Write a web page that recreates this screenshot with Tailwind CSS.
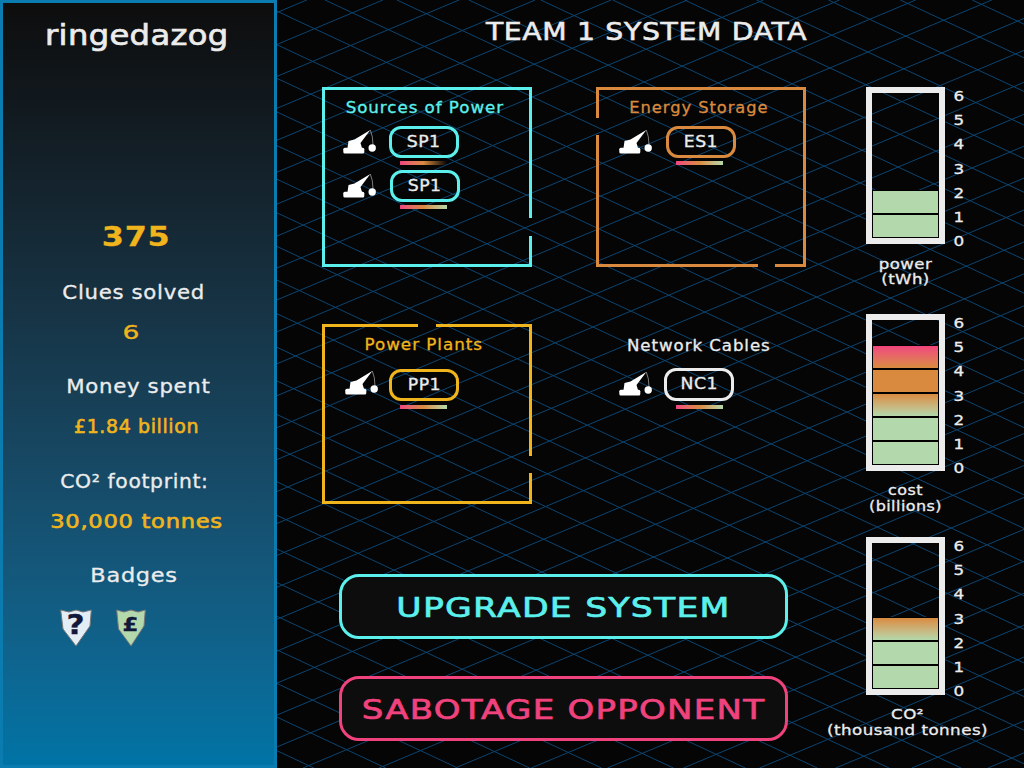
<!DOCTYPE html>
<html lang="en">
<head>
    <meta charset="UTF-8">
    <title>Team 1 System Data</title>
    <script src="https://cdn.jsdelivr.net/npm/@tailwindcss/browser@4"></script>
</head>
<body class="relative w-[1024px] h-[768px] overflow-hidden bg-[#050505] text-[#ececec] font-['DejaVu_Sans',sans-serif] [-webkit-text-stroke:0.3px]">

    <!-- background lattice, filled in by the script at the bottom -->
    <svg id="lattice" class="absolute inset-0" width="1024" height="768"></svg>

    <svg width="0" height="0" class="absolute">
        <symbol id="crane" viewBox="0 0 34 26">
            <rect x="0.3" y="18.8" width="21" height="5.6" rx="1.5" fill="#fff"/>
            <path d="M4.5 19 L5.5 12 L11.5 10.5 L27.3 1 L17.5 14 L19 19 Z" fill="#fff"/>
            <path d="M27.3 1 Q30 7 30 16" fill="none" stroke="#ccc" stroke-width="0.6"/>
            <circle cx="29.2" cy="19" r="3.7" fill="#fff"/>
        </symbol>
    </svg>

    <div class="relative flex w-[1024px] h-[768px]">
        <!-- sidebar -->
        <aside class="w-[277px] h-[768px] shrink-0 border-3 border-[#0a7cb0] bg-gradient-to-b from-[#0d0d0d] to-[#0074a6] flex flex-col items-center pt-[19px] pr-[4px] leading-[28px] text-[19px] tracking-[0.6px]">
            <h1 class="text-[28px] leading-[28px] tracking-[0.3px] scale-x-[1.15] [-webkit-text-stroke:0.7px]">ringedazog</h1>
            <p class="mt-[173px] text-[#f0b41c] text-[27px] font-bold scale-x-[1.18]">375</p>
            <p class="mt-[27px] mr-[5px] scale-x-[1.12]">Clues solved</p>
            <p class="mt-[12px] mr-[11px] text-[#f0b41c] scale-x-[1.4]">6</p>
            <p class="mt-[26px] ml-[4px] scale-x-[1.12]">Money spent</p>
            <p class="mt-[12px] text-[#f0b41c] [-webkit-text-stroke:0.6px]">£1.84 billion</p>
            <p class="mt-[27px] mr-[4px] scale-x-[1.07]">CO² footprint:</p>
            <p class="mt-[12px] text-[#f0b41c] scale-x-[1.19] [-webkit-text-stroke:0.6px]">30,000 tonnes</p>
            <p class="mt-[26px] mr-[5px] scale-x-[1.18]">Badges</p>
            <div class="mt-[20px] self-start ml-[57px] flex gap-[24px]">
                <div class="grid place-items-center w-[32px] h-[38px]">
                    <svg class="col-start-1 row-start-1" width="32" height="38" viewBox="0 0 32 38"><path d="M0.7 1 L9 3 L16 1 L23 3 L31.3 1 L30 17 L16 37 L3 20 Z" fill="#e3edf5" stroke="#777" stroke-width="1"/></svg>
                    <span class="col-start-1 row-start-1 text-[#12183a] text-[26px] font-bold leading-none -mt-[6px] scale-x-[1.2]">?</span>
                </div>
                <div class="grid place-items-center w-[30px] h-[38px]">
                    <svg class="col-start-1 row-start-1" width="30" height="38" viewBox="0 0 30 38"><path d="M0.7 1 L8 3 L15 1 L22 3 L29.3 1 L28 17 L15 37 L2.5 20 Z" fill="#b2d8ab" stroke="#777" stroke-width="1"/></svg>
                    <span class="col-start-1 row-start-1 text-[#12183a] text-[19px] font-bold leading-none -mt-[8px] scale-x-[1.2]">£</span>
                </div>
            </div>
        </aside>

        <main class="flex-1">
            <h2 class="mt-[18px] pr-[7px] text-center text-[25px] leading-[28px] tracking-[0.6px] scale-x-[1.13] [-webkit-text-stroke:0.6px]">TEAM 1 SYSTEM DATA</h2>

            <div class="flex mt-[41px] ml-[45px]">
                <div class="w-[484px]">
                    <div class="grid grid-cols-[210px_210px] grid-rows-[180px_180px] gap-x-[64px] gap-y-[57px]">

                        <section class="relative text-[#5cf0ec]">
                            <svg class="absolute inset-0" width="210" height="180" fill="none" stroke="currentColor" stroke-width="3"><path d="M208.5 131 V1.5 H1.5 V178.5 H208.5 V149"/></svg>
                            <h3 class="pt-[11px] pr-[4px] text-center text-[15.5px] leading-[20px] tracking-[0.9px] scale-x-[1.075]">Sources of Power</h3>
                            <div class="mt-[8px] flex flex-col gap-[5px]">
                                <div class="flex pl-[21px] gap-[12px]">
                                    <svg class="mt-[3px]" width="34" height="26"><use href="#crane"/></svg>
                                    <div>
                                        <div class="w-[70px] h-[32px] rounded-[12px] border-3 border-[#5cf0ec] flex items-center justify-center text-[#ececec] text-[15px] tracking-[0.4px]"><span class="scale-x-[1.15]">SP1</span></div>
                                        <div class="mt-[3px] ml-[11px] w-[47px] h-[4px] bg-gradient-to-r from-[#f0437c] via-[#d98a3e] to-transparent"></div>
                                    </div>
                                </div>
                                <div class="flex pl-[21px] gap-[13px]">
                                    <svg class="mt-[3px]" width="34" height="26"><use href="#crane"/></svg>
                                    <div>
                                        <div class="w-[70px] h-[32px] rounded-[12px] border-3 border-[#5cf0ec] flex items-center justify-center text-[#ececec] text-[15px] tracking-[0.4px]"><span class="scale-x-[1.15]">SP1</span></div>
                                        <div class="mt-[3px] ml-[10px] w-[47px] h-[4px] bg-gradient-to-r from-[#f0437c] via-[#d98a3e] to-[#b2d8ab]"></div>
                                    </div>
                                </div>
                            </div>
                        </section>

                        <section class="relative text-[#d98a3e]">
                            <svg class="absolute inset-0" width="210" height="180" fill="none" stroke="currentColor" stroke-width="3"><path d="M1.5 31 V1.5 H208.5 V178.5 H179 M162 178.5 H1.5 V48"/></svg>
                            <h3 class="pt-[11px] pr-[4px] text-center text-[15.5px] leading-[20px] tracking-[0.9px] scale-x-[1.05]">Energy Storage</h3>
                            <div class="mt-[8px] flex pl-[23px] gap-[13px]">
                                <svg class="mt-[3px]" width="34" height="26"><use href="#crane"/></svg>
                                <div>
                                    <div class="w-[70px] h-[32px] rounded-[12px] border-3 border-[#d98a3e] flex items-center justify-center text-[#ececec] text-[15px] tracking-[0.4px]"><span class="scale-x-[1.15]">ES1</span></div>
                                    <div class="mt-[3px] ml-[10px] w-[47px] h-[4px] bg-gradient-to-r from-[#f0437c] via-[#d98a3e] to-[#b2d8ab]"></div>
                                </div>
                            </div>
                        </section>

                        <section class="relative text-[#f0b41c]">
                            <svg class="absolute inset-0" width="210" height="180" fill="none" stroke="currentColor" stroke-width="3"><path d="M208.5 132 V1.5 H114 M96 1.5 H1.5 V178.5 H208.5 V149"/></svg>
                            <h3 class="pt-[11px] pr-[6px] text-center text-[15.5px] leading-[20px] tracking-[0.9px] scale-x-[1.08]">Power Plants</h3>
                            <div class="mt-[14px] flex pl-[23px] gap-[10px]">
                                <svg class="mt-[1px]" width="34" height="26"><use href="#crane"/></svg>
                                <div>
                                    <div class="w-[70px] h-[32px] rounded-[12px] border-3 border-[#f0b41c] flex items-center justify-center text-[#ececec] text-[15px] tracking-[0.4px]"><span class="scale-x-[1.15]">PP1</span></div>
                                    <div class="mt-[4px] ml-[11px] w-[47px] h-[4px] bg-gradient-to-r from-[#f0437c] via-[#d98a3e] to-[#b2d8ab]"></div>
                                </div>
                            </div>
                        </section>

                        <section>
                            <h3 class="pt-[12px] pr-[4px] text-center text-[15.5px] leading-[20px] tracking-[0.9px] scale-x-[1.07]">Network Cables</h3>
                            <div class="mt-[12px] flex pl-[23px] gap-[11px]">
                                <svg class="mt-[3px]" width="34" height="26"><use href="#crane"/></svg>
                                <div>
                                    <div class="w-[70px] h-[33px] rounded-[12px] border-3 border-[#ececec] flex items-center justify-center text-[15px] tracking-[0.4px]"><span class="scale-x-[1.15]">NC1</span></div>
                                    <div class="mt-[4px] ml-[12px] w-[47px] h-[4px] bg-gradient-to-r from-[#f0437c] via-[#d98a3e] to-[#b2d8ab]"></div>
                                </div>
                            </div>
                        </section>
                    </div>

                    <button class="block mt-[70px] ml-[17px] w-[449px] h-[65px] rounded-[20px] border-3 border-[#5cf0ec] bg-[#0d0d0d] text-[#5cf0ec] text-[27px] tracking-[1px]"><span class="block scale-x-[1.28] translate-y-[2px] [-webkit-text-stroke:0.7px]">UPGRADE SYSTEM</span></button>
                    <button class="block mt-[37px] ml-[17px] w-[449px] h-[65px] rounded-[20px] border-3 border-[#f0427c] bg-[#0d0d0d] text-[#f0427c] text-[27px] tracking-[1px]"><span class="block scale-x-[1.26] translate-y-[2px] [-webkit-text-stroke:0.7px]">SABOTAGE OPPONENT</span></button>
                </div>

                <!-- gauges -->
                <div class="ml-[60px] text-[14px] tracking-[0.4px]">
                    <div>
                        <div class="flex">
                            <div class="w-[79px] h-[157px] border-6 border-[#ececec] flex flex-col justify-end">
                                <div class="h-[24px] border border-black bg-[#b2d8ab]"></div>
                                <div class="h-[24px] border border-black bg-[#b2d8ab]"></div>
                            </div>
                            <div class="w-[28px] h-[157px] -mt-[3px] text-center leading-[24.2px] scale-x-[1.2]"><p>6</p><p>5</p><p>4</p><p>3</p><p>2</p><p>1</p><p>0</p></div>
                        </div>
                        <div class="mt-[13px] w-[79px] flex flex-col items-center leading-[15px] whitespace-nowrap scale-x-[1.18]"><span>power</span><span>(tWh)</span></div>
                    </div>

                    <div class="mt-[27px]">
                        <div class="flex">
                            <div class="w-[79px] h-[157px] border-6 border-[#ececec] flex flex-col justify-end">
                                <div class="h-[24px] border border-black bg-gradient-to-b from-[#f0437c] to-[#d98a3e]"></div>
                                <div class="h-[24px] border border-black bg-[#d98a3e]"></div>
                                <div class="h-[24px] border border-black bg-gradient-to-b from-[#d98a3e] to-[#b2d8ab]"></div>
                                <div class="h-[24px] border border-black bg-[#b2d8ab]"></div>
                                <div class="h-[24px] border border-black bg-[#b2d8ab]"></div>
                            </div>
                            <div class="w-[28px] h-[157px] -mt-[3px] text-center leading-[24.2px] scale-x-[1.2]"><p>6</p><p>5</p><p>4</p><p>3</p><p>2</p><p>1</p><p>0</p></div>
                        </div>
                        <div class="mt-[11px] w-[79px] flex flex-col items-center leading-[16px] whitespace-nowrap scale-x-[1.14]"><span>cost</span><span>(billions)</span></div>
                    </div>

                    <div class="mt-[23px]">
                        <div class="flex">
                            <div class="w-[79px] h-[158px] border-6 border-[#ececec] flex flex-col justify-end">
                                <div class="h-[24px] border border-black bg-gradient-to-b from-[#d98a3e] to-[#b2d8ab]"></div>
                                <div class="h-[24px] border border-black bg-[#b2d8ab]"></div>
                                <div class="h-[24px] border border-black bg-[#b2d8ab]"></div>
                            </div>
                            <div class="w-[28px] h-[157px] -mt-[3px] text-center leading-[24.2px] scale-x-[1.2]"><p>6</p><p>5</p><p>4</p><p>3</p><p>2</p><p>1</p><p>0</p></div>
                        </div>
                        <div class="mt-[11px] w-[79px] ml-[2px] flex flex-col items-center leading-[16px] whitespace-nowrap scale-x-[1.19]"><span>CO²</span><span>(thousand tonnes)</span></div>
                    </div>
                </div>
            </div>
        </main>
    </div>

    <script>
        const svg = document.getElementById("lattice");
        const origin = [623.3, 442];
        const d1 = [36, 16.83];
        const d2 = [37.9, -15.9];

        // draw one lattice line, trimmed to the 1024x768 frame
        function addLine(step, along, k) {
            const x = origin[0] + step[0] * k;
            const y = origin[1] + step[1] * k;
            let t0 = (0 - x) / along[0];
            let t1 = (1024 - x) / along[0];
            const ty0 = (0 - y) / along[1];
            const ty1 = (768 - y) / along[1];
            const from = Math.max(t0, Math.min(ty0, ty1));
            const to = Math.min(t1, Math.max(ty0, ty1));
            if (from >= to) return;

            const line = document.createElementNS("http://www.w3.org/2000/svg", "line");
            line.setAttribute("x1", x + along[0] * from);
            line.setAttribute("y1", y + along[1] * from);
            line.setAttribute("x2", x + along[0] * to);
            line.setAttribute("y2", y + along[1] * to);
            line.setAttribute("stroke", "#0c4470");
            svg.appendChild(line);
        }

        for (let k = -60; k <= 60; k++) {
            addLine(d2, d1, k);
            addLine(d1, d2, k);
        }
    </script>
</body>
</html>
